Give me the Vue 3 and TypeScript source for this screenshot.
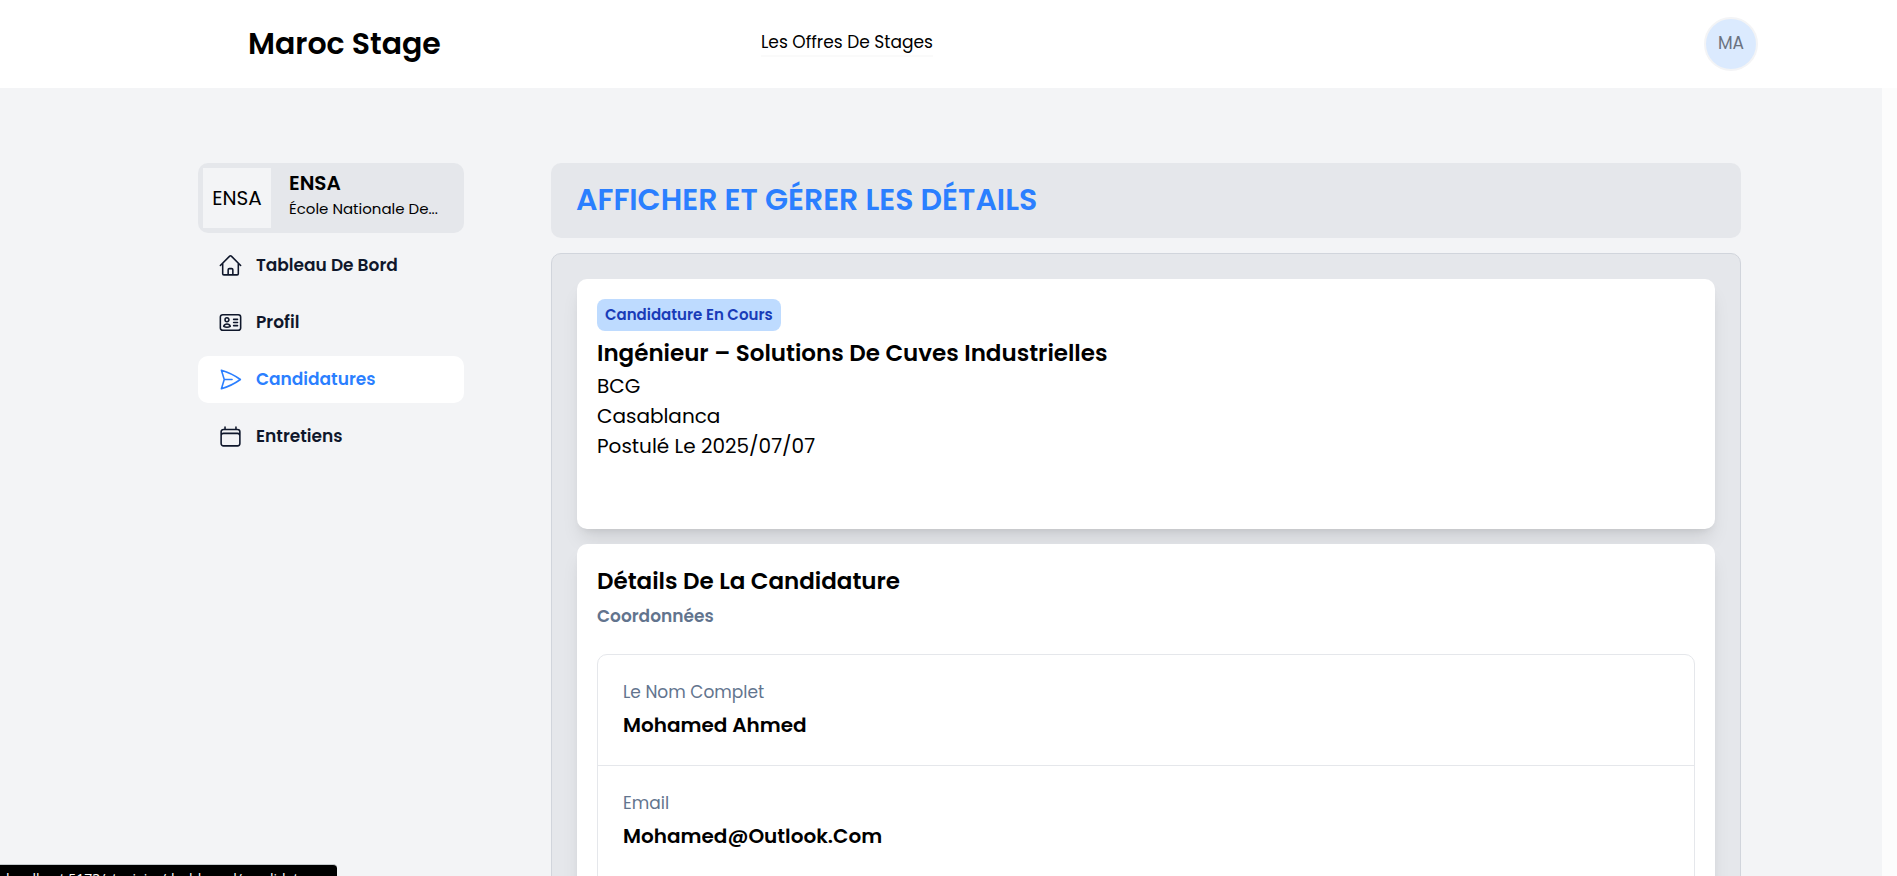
<script setup lang="ts">
interface NavItem {
  label: string
  icon: string
  active?: boolean
}

interface Detail {
  label: string
  value: string
}

const navItems: NavItem[] = [
  {
    label: 'Tableau De Bord',
    icon: 'm2.25 12 8.954-8.955c.44-.439 1.152-.439 1.591 0L21.75 12M4.5 9.75v10.125c0 .621.504 1.125 1.125 1.125H9.75v-4.875c0-.621.504-1.125 1.125-1.125h2.25c.621 0 1.125.504 1.125 1.125V21h4.125c.621 0 1.125-.504 1.125-1.125V9.75M8.25 21h8.25',
  },
  {
    label: 'Profil',
    icon: 'M15 9h3.75M15 12h3.75M15 15h3.75M4.5 19.5h15a2.25 2.25 0 0 0 2.25-2.25V6.75A2.25 2.25 0 0 0 19.5 4.5h-15a2.25 2.25 0 0 0-2.25 2.25v10.5A2.25 2.25 0 0 0 4.5 19.5Zm6-10.125a1.875 1.875 0 1 1-3.75 0 1.875 1.875 0 0 1 3.75 0Zm1.294 6.336a6.721 6.721 0 0 1-3.17.789 6.721 6.721 0 0 1-3.168-.789 3.376 3.376 0 0 1 6.338 0Z',
  },
  {
    label: 'Candidatures',
    icon: 'M6 12 3.269 3.125A59.769 59.769 0 0 1 21.485 12 59.768 59.768 0 0 1 3.27 20.875L5.999 12Zm0 0h7.5',
    active: true,
  },
  {
    label: 'Entretiens',
    icon: 'M6.75 3v2.25M17.25 3v2.25M3 18.75V7.5a2.25 2.25 0 0 1 2.25-2.25h13.5A2.25 2.25 0 0 1 21 7.5v11.25m-18 0A2.25 2.25 0 0 0 5.25 21h13.5A2.25 2.25 0 0 0 21 18.75m-18 0v-7.5A2.25 2.25 0 0 1 5.25 9h13.5A2.25 2.25 0 0 1 21 11.25v7.5',
  },
]

const details: Detail[] = [
  { label: 'Le Nom Complet', value: 'Mohamed Ahmed' },
  { label: 'Email', value: 'Mohamed@Outlook.Com' },
]
</script>

<template>
  <div class="shell">
    <header class="topbar">
      <a class="brand" href="#">Maroc Stage</a>
      <nav class="topnav"><a class="toplink" href="#">Les Offres De Stages</a></nav>
      <button class="avatar" type="button">MA</button>
    </header>

    <div class="page">
      <aside class="sidebar">
        <div class="school">
          <div class="school-logo">ENSA</div>
          <div class="school-text">
            <p class="school-name">ENSA</p>
            <p class="school-desc">École Nationale De...</p>
          </div>
        </div>
        <nav class="menu">
          <a
            v-for="item in navItems"
            :key="item.label"
            class="menu-item"
            :class="{ active: item.active }"
            href="#"
          >
            <svg class="menu-icon" viewBox="0 0 24 24" aria-hidden="true">
              <path :d="item.icon" />
            </svg>
            <span class="menu-label">{{ item.label }}</span>
          </a>
        </nav>
      </aside>

      <main class="main">
        <h1 class="heading">AFFICHER ET GÉRER LES DÉTAILS</h1>
        <div class="panel">
          <section class="card summary">
            <span class="badge">Candidature En Cours</span>
            <h2 class="card-title offer">Ingénieur – Solutions De Cuves Industrielles</h2>
            <p class="line">BCG</p>
            <p class="line">Casablanca</p>
            <p class="line">Postulé Le 2025/07/07</p>
          </section>
          <section class="card">
            <h2 class="card-title">Détails De La Candidature</h2>
            <h3 class="card-subtitle">Coordonnées</h3>
            <dl class="details">
              <div v-for="detail in details" :key="detail.label" class="detail">
                <dt>{{ detail.label }}</dt>
                <dd>{{ detail.value }}</dd>
              </div>
            </dl>
          </section>
        </div>
      </main>
    </div>

    <div class="status">localhost:5173/stagiaire/dashboard/candidatures</div>
  </div>
</template>

<style>
body {
  margin: 0;
}
</style>

<style scoped>
.shell {
  display: flex;
  flex-direction: column;
  height: 100vh;
  overflow: hidden;
  background: #fcfcfc;
  color: #000;
  font-family: Poppins, Inter, "Liberation Sans", sans-serif;
  font-size: 17px;
  line-height: 24px;
}
.shell * {
  box-sizing: border-box;
}
a {
  color: inherit;
  text-decoration: none;
}
h1, h2, h3, p, dl, dd {
  margin: 0;
}
.topbar {
  flex: none;
  display: grid;
  grid-template-columns: 513px 1fr auto;
  align-items: center;
  height: 88px;
  padding: 0 139px 0 248px;
  background: #fff;
}
.topnav {
  display: flex;
}
.brand {
  font-size: 30px;
  font-weight: 600;
  line-height: 40px;
}
.toplink {
  padding-bottom: 2px;
  border-bottom: 2px solid #fafafa;
  line-height: 22px;
}
.avatar {
  width: 54px;
  height: 54px;
  padding: 0 0 2px;
  border: 2px solid #f3f4f6;
  border-radius: 50%;
  background: #dbeafe;
  color: #6b7280;
  font: inherit;
}
.page {
  flex: 1;
  display: flex;
  align-items: flex-start;
  gap: 87px;
  min-height: 0;
  margin-right: 15px;
  padding: 75px 141px 0 198px;
  overflow-y: auto;
  scrollbar-width: none;
  background: #f3f4f6;
}
.sidebar {
  flex: none;
  width: 266px;
}
.school {
  display: flex;
  gap: 18px;
  height: 70px;
  padding: 5px;
  border-radius: 10px;
  background: #e5e7eb;
}
.school-logo {
  display: flex;
  align-items: center;
  justify-content: center;
  width: 68px;
  background: #f3f4f6;
  font-size: 20px;
}
.school-text {
  padding-top: 3px;
  white-space: nowrap;
}
.school-name {
  font-size: 20px;
  font-weight: 600;
}
.school-desc {
  font-size: 15px;
  line-height: 28px;
}
.menu {
  display: flex;
  flex-direction: column;
  gap: 10px;
  padding-top: 9px;
}
.menu-item {
  display: flex;
  align-items: center;
  gap: 13px;
  height: 47px;
  padding: 0 20px;
  border-radius: 10px;
  color: #0f172b;
  font-weight: 600;
}
.menu-item.active {
  background: #fff;
  color: #2b7fff;
}
.menu-icon {
  width: 25px;
  height: 25px;
  fill: none;
  stroke: currentColor;
  stroke-width: 1.5;
  stroke-linecap: round;
  stroke-linejoin: round;
}
.menu-label {
  padding-bottom: 2px;
}
.main {
  flex: 1;
  min-width: 0;
}
.heading {
  padding: 17px 25px 18px;
  border-radius: 10px;
  background: #e5e7eb;
  color: #2b7fff;
  font-size: 30px;
  font-weight: 600;
  line-height: 40px;
}
.panel {
  display: flex;
  flex-direction: column;
  gap: 15px;
  margin-top: 15px;
  padding: 25px;
  border: 1px solid #d1d5dc;
  border-radius: 10px;
  background: #e5e7eb;
}
.card {
  padding: 20px;
  border-radius: 10px;
  background: #fff;
  box-shadow: 0 13px 19px -4px rgb(0 0 0 / 0.1), 0 5px 8px -5px rgb(0 0 0 / 0.1);
}
.summary {
  min-height: 250px;
}
.badge {
  display: block;
  width: fit-content;
  padding: 0 8px;
  border-radius: 8px;
  background: #bedbff;
  color: #193cb8;
  font-size: 15px;
  font-weight: 600;
  line-height: 32px;
}
.card-title {
  font-size: 23px;
  font-weight: 600;
  line-height: 34px;
}
.offer {
  margin: 5px 0 1px;
}
.line {
  font-size: 20px;
  line-height: 30px;
}
.card-subtitle {
  color: #62748e;
  font-size: 17px;
  font-weight: 600;
  line-height: 36px;
}
.details {
  margin-top: 20px;
  border: 1px solid #e5e7eb;
  border-radius: 10px;
}
.detail {
  padding: 25px;
}
.detail:last-child {
  padding-bottom: 40px;
}
.detail + .detail {
  border-top: 1px solid #e5e7eb;
}
dt {
  color: #62748e;
}
dd {
  margin-top: 6px;
  font-size: 20px;
  font-weight: 600;
  line-height: 30px;
}
.status {
  position: fixed;
  left: 0;
  bottom: 0;
  width: 337px;
  height: 12px;
  padding: 5px 0 0 6px;
  overflow: hidden;
  border-top: 1px solid #c5cacd;
  border-top-right-radius: 4px;
  background: #000;
  color: #fff;
  font-family: "Open Sans", sans-serif;
  font-size: 14px;
  line-height: 18px;
  white-space: nowrap;
}
</style>
